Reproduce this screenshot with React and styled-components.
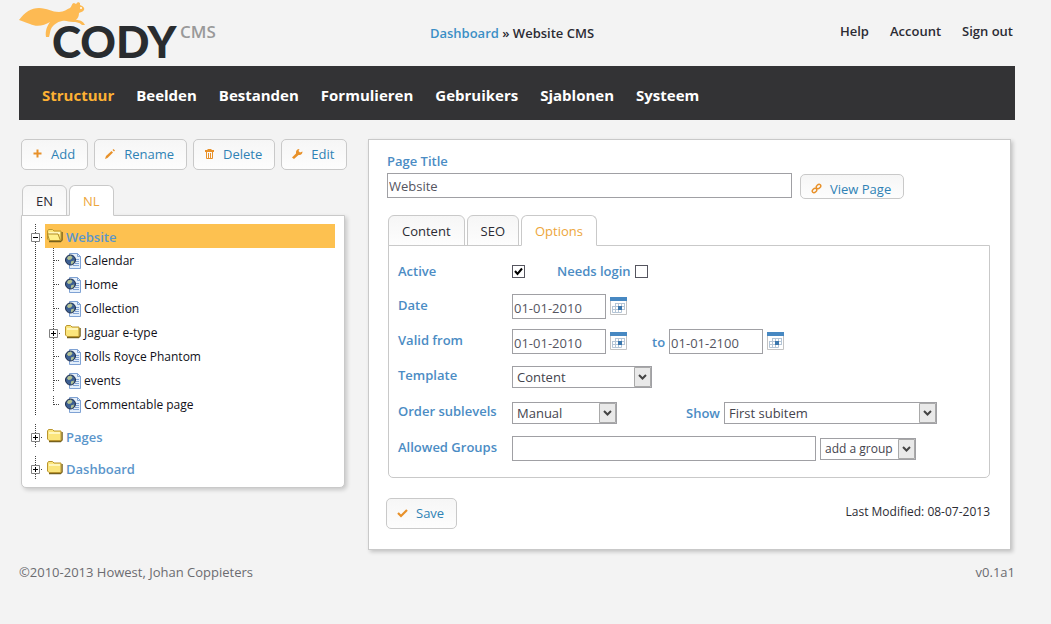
import styled, { createGlobalStyle } from "styled-components";

const GlobalStyle = createGlobalStyle`
  *, *::before, *::after {
    box-sizing: border-box;
  }
  body {
    margin: 0;
    background: #f3f3f3;
    color: #2b2b33;
    font-family: "Trebuchet MS", "Open Sans", "Noto Sans", sans-serif;
    font-size: 13px;
    line-height: 18px;
  }
  a {
    color: inherit;
    text-decoration: none;
  }
  button, input, select {
    font: inherit;
    color: inherit;
    margin: 0;
  }
`;

const Page = styled.div`
  padding: 0 36px 0 19px;
`;

const Header = styled.header`
  display: grid;
  grid-template-columns: 1fr auto 1fr;
  height: 66px;
  font-weight: 600;
`;

const Logo = styled.svg`
  width: 200px;
  height: 66px;
  overflow: visible;
`;

const Crumbs = styled.div`
  padding: 24px 10px 0 0;
  a {
    color: #3b8fc6;
  }
`;

const UserLinks = styled.nav`
  display: flex;
  justify-content: flex-end;
  gap: 21px;
  padding: 22px 2px 0 0;
`;

const MainNav = styled.nav`
  display: flex;
  align-items: center;
  gap: 22px;
  height: 54px;
  padding: 4px 23px 0;
  background: #333335;
  font-size: 15px;
  font-weight: 700;
`;

const NavLink = styled.a`
  color: ${(props) => (props.$active ? "#fdb134" : "#fff")};
`;

const Columns = styled.main`
  display: grid;
  grid-template-columns: 330px minmax(0, 1fr);
  align-items: start;
  gap: 19px;
  padding: 19px 4px 0 0;
`;

const Toolbar = styled.div`
  display: flex;
  gap: 6px;
  padding-left: 2px;
  margin-bottom: 15px;
`;

const Button = styled.button`
  display: flex;
  align-items: center;
  gap: 8px;
  height: ${(props) => (props.$small ? "25px" : "31px")};
  padding: ${(props) => (props.$small ? "4px 12px 0 10px" : "0 12px 2px 10px")};
  border: 1px solid #c9c9c9;
  border-radius: 5px;
  background: linear-gradient(#f6f6f6, #fdfdfd);
  color: #2f82b5;
  font-weight: 500;
  white-space: nowrap;
  cursor: pointer;
  svg {
    width: 11px;
    height: 11px;
    flex: none;
  }
`;

const Tabs = styled.div`
  display: flex;
  gap: 2px;
  margin: 0 0 -1px 1px;
  position: relative;
`;

const Tab = styled.button`
  height: 31px;
  padding: 0 13px;
  border: 1px solid #c9c9c9;
  border-bottom-color: ${(props) => (props.$active ? "#fff" : "#c9c9c9")};
  border-radius: 6px 6px 0 0;
  background: ${(props) => (props.$active ? "#fff" : "linear-gradient(#f6f6f6, #fdfdfd)")};
  color: ${(props) => (props.$active ? "#eda63a" : "#2b2b33")};
  font-weight: 500;
  cursor: pointer;
`;

const TreeArea = styled.div`
  padding: 0 4px 0 2px;
`;

const TreePanel = styled.div`
  padding: 8px 9px 7px;
  border: 1px solid #c9c9c9;
  border-radius: 0 0 5px 5px;
  background: #fff;
  box-shadow: 2px 2px 4px rgba(0, 0, 0, 0.18);
`;

const TreeList = styled.ul`
  display: flex;
  flex-direction: column;
  gap: 8px;
  list-style: none;
  margin: 0;
  padding: 0;
`;

const SubList = styled(TreeList)`
  gap: 0;
  padding-left: 18px;
  background: repeating-linear-gradient(#333 0 1px, transparent 1px 2px) 4px 0 / 1px 100% no-repeat;
`;

const Row = styled.div`
  display: flex;
  align-items: center;
  height: 24px;
`;

const Twig = styled.svg`
  width: 14px;
  height: 24px;
  flex: none;
`;

const NodeLabel = styled.a`
  display: flex;
  align-items: center;
  flex: 1;
  gap: 2px;
  height: 24px;
  padding: 2px 0 0 2px;
  background: ${(props) => (props.$selected ? "#fdc150" : "transparent")};
  color: ${(props) => (props.$top ? "#5b96cb" : "#101018")};
  font-size: ${(props) => (props.$top ? "13px" : "12px")};
  font-weight: ${(props) => (props.$top ? 600 : 400)};
  white-space: nowrap;
  svg {
    width: 17px;
    height: 16px;
    flex: none;
  }
`;

const Panel = styled.form`
  padding: 12px 20px 20px 18px;
  border: 1px solid #c9c9c9;
  background: #fff;
  box-shadow: 2px 2px 4px rgba(0, 0, 0, 0.2);
`;

const Label = styled.label`
  color: #4b8cc4;
  font-weight: 600;
  white-space: nowrap;
`;

const TitleRow = styled.div`
  display: flex;
  align-items: flex-start;
  gap: 8px;
  margin: 3px 0 16px;
  button {
    margin-top: 1px;
  }
`;

const TextInput = styled.input`
  width: ${(props) => props.$width};
  height: 25px;
  padding: 0 1px;
  border: 1px solid #a0a0a4;
  border-radius: 0;
  background: #fff;
  color: #55555f;
`;

const DateInput = styled(TextInput)`
  padding-top: 2px;
`;

const Options = styled.div`
  display: flex;
  flex-direction: column;
  margin-left: 1px;
  padding: 14px 9px;
  border: 1px solid #c9c9c9;
  border-radius: 0 0 5px 5px;
`;

const FieldRow = styled.div`
  display: grid;
  grid-template-columns: 114px 1fr;
  align-items: start;
  height: ${(props) => props.$height};
  > label {
    padding-top: ${(props) => (props.$select ? "0" : "2px")};
  }
`;

const Controls = styled.div`
  display: flex;
  align-items: center;
  gap: 4px;
  min-height: 22px;
`;

const Group = styled.div`
  display: flex;
  align-items: center;
  gap: 4px;
  margin-left: ${(props) => props.$indent || "0"};
`;

const CheckBox = styled.input`
  appearance: none;
  width: 13px;
  height: 13px;
  border: 1px solid #55555f;
  background: #fff;
  &:checked {
    background: #fff
      url("data:image/svg+xml,%3Csvg xmlns='http://www.w3.org/2000/svg' viewBox='0 0 11 11'%3E%3Cpath d='M2 5l2.5 3L9 2.5' fill='none' stroke='black' stroke-width='2'/%3E%3C/svg%3E");
  }
`;

const CalendarButton = styled.button`
  width: 17px;
  height: 20px;
  padding: 0 0 2px;
  border: 0;
  background: none;
  cursor: pointer;
  svg {
    display: block;
  }
`;

const SelectBox = styled.div`
  display: grid;
  width: ${(props) => props.$width};
  height: 22px;
  border: 1px solid #a0a0a4;
  background: #fff;
  select, svg {
    grid-area: 1 / 1;
  }
  select {
    appearance: none;
    width: 100%;
    padding: 0 17px 0 4px;
    border: 0;
    background: none;
    color: #44444e;
    font-size: ${(props) => (props.$compact ? "12px" : "13px")};
  }
  svg {
    justify-self: end;
    width: 17px;
    height: 20px;
    pointer-events: none;
  }
`;

const SaveRow = styled.div`
  display: flex;
  justify-content: space-between;
  align-items: flex-start;
  margin: 20px 0 0 -1px;
`;

const Modified = styled.span`
  padding-top: 5px;
  font-size: 12px;
`;

const Footer = styled.footer`
  display: flex;
  justify-content: space-between;
  padding-top: 13px;
  color: #6b6b70;
`;

const icons = {
  add: <path d="M5.5 1.5v8M1.5 5.5h8" stroke="#e8912a" strokeWidth="2" />,
  rename: (
    <g fill="#e8912a">
      <path d="M0 11l1-3 5.5-5L8 4.5 2.500 10z" />
      <path d="M7.500 2l1-1L10 2.500l-1 1z" />
    </g>
  ),
  trash: (
    <g fill="none" stroke="#e8912a">
      <path d="M1 3h9" strokeWidth="2" />
      <path d="M3.500 1.500h4M2.500 4v6.500h6V4M4.500 5v5M6.500 5v5" />
    </g>
  ),
  wrench: (
    <path
      d="M0 9.500l4-4C3.500 3 5 1 7.500 1L6.500 3 8 4.500l2.500-1C10.500 6 9 7.500 6.500 7L2 11z"
      fill="#e8912a"
    />
  ),
  link: (
    <g fill="none" stroke="#e8912a" strokeWidth="1.500">
      <ellipse cx="7.500" cy="3.500" rx="2.500" ry="1.800" transform="rotate(-45 7.500 3.500)" />
      <ellipse cx="3.500" cy="7.500" rx="2.500" ry="1.800" transform="rotate(-45 3.500 7.500)" />
    </g>
  ),
  check: <path d="M1 6l3 3 6-6" fill="none" stroke="#e8912a" strokeWidth="2.200" />,
};

function Icon({ name }) {
  return (
    <svg viewBox="0 0 11 11" aria-hidden="true">
      {icons[name]}
    </svg>
  );
}

function FolderIcon({ open }) {
  return (
    <svg viewBox="0 0 17 16" aria-hidden="true">
      <path d="M2 12.500h11.500L15 11V3" fill="none" stroke="#76601c" strokeWidth="1.500" />
      <path d="M.5 10V2l1-1.500h4L7 2h7v9.500H2z" fill="#fbe57c" stroke="#bb962e" />
      <path d="M2 3h11v2H2z" fill="#fff6bd" />
      {open && <path d="M2.500 11.500L.5 5H11l2.500 6.500z" fill="#fff08c" stroke="#b18b24" />}
    </svg>
  );
}

function PageIcon() {
  return (
    <svg viewBox="0 0 17 16" aria-hidden="true">
      <path d="M4.500.5h8l3 3v12h-11z" fill="#e4effb" stroke="#7fa2d4" />
      <path d="M12.500.5v3h3M11 6.500h3M11 8.500h3M10 10.500h4M8 12.500h6" fill="none" stroke="#7fa2d4" />
      <circle cx="5.500" cy="7" r="5" fill="#3c5f92" stroke="#1d2c4b" />
      <path d="M3 3.500l3-1 1.500 2L6 6.500 3.500 7 2 5.500zM6 8.500l3-1-.5 2.500L6 11.500z" fill="#b4c292" />
    </svg>
  );
}

function CalendarIcon() {
  return (
    <svg width="17" height="18" viewBox="0 0 17 18" aria-hidden="true">
      <path d="M.5.5h16v17H.5z" fill="#fff" stroke="#c3c3c3" />
      <path d="M0 0h17v4H0z" fill="#4788c2" />
      <path
        d="M5 6.500h9.500M2.500 9.500h12M2.500 12.500h12M2.500 15.500h9M2.500 9v6.500M5.500 6v9.500M8.500 6v9.500M11.500 6v9.500M14.500 6v7"
        fill="none"
        stroke="#b4c5d6"
      />
      <path d="M8 9h4v4H8z" fill="#3a76ad" />
    </svg>
  );
}

function Joint({ kind }) {
  const dots = { stroke: "#444", strokeDasharray: "1 1", fill: "none" };
  if (kind === "leaf" || kind === "last") {
    return (
      <Twig viewBox="0 0 14 24" aria-hidden="true">
        <path d={kind === "last" ? "M4.500 4v9" : "M4.500 0v24"} {...dots} />
        <path d="M5 12.500h6" {...dots} />
      </Twig>
    );
  }
  return (
    <Twig viewBox="0 0 14 24" aria-hidden="true">
      <path d="M4.500 0v24M10 13.500h2" {...dots} />
      <path d="M.5 9.500h8v8h-8z" fill="#fff" stroke="#808080" />
      <path d={kind === "minus" ? "M2 13.500h5" : "M2 13.500h5M4.500 11v5"} stroke="#000" />
    </Twig>
  );
}

function TreeNode({ node, nested, last }) {
  let kind = last ? "last" : "leaf";
  if (node.folder) kind = node.children ? "minus" : "plus";
  return (
    <li>
      <Row>
        <Joint kind={kind} />
        <NodeLabel href="#" $top={!nested} $selected={node.selected}>
          {node.folder ? <FolderIcon open={Boolean(node.children)} /> : <PageIcon />}
          {node.title}
        </NodeLabel>
      </Row>
      {node.children && (
        <SubList>
          {node.children.map((child, i) => (
            <TreeNode key={child.title} node={child} nested last={i === node.children.length - 1} />
          ))}
        </SubList>
      )}
    </li>
  );
}

function Select({ id, width, options, label, compact }) {
  return (
    <SelectBox $width={width} $compact={compact}>
      <select id={id} aria-label={label}>
        {options.map((option) => (
          <option key={option}>{option}</option>
        ))}
      </select>
      <svg viewBox="0 0 17 20" aria-hidden="true">
        <path d="M.5.5h16v19H.5z" fill="#e9e9e9" stroke="#a9a9a9" />
        <path d="M5 8l3.500 3.500L12 8" fill="none" stroke="#444" strokeWidth="2" />
      </svg>
    </SelectBox>
  );
}

function DateField({ id, value }) {
  return (
    <>
      <DateInput id={id} $width="94px" defaultValue={value} />
      <CalendarButton type="button" aria-label="Pick a date">
        <CalendarIcon />
      </CalendarButton>
    </>
  );
}

const navItems = ["Structuur", "Beelden", "Bestanden", "Formulieren", "Gebruikers", "Sjablonen", "Systeem"];

const tree = [
  {
    title: "Website",
    folder: true,
    selected: true,
    children: [
      { title: "Calendar" },
      { title: "Home" },
      { title: "Collection" },
      { title: "Jaguar e-type", folder: true },
      { title: "Rolls Royce Phantom" },
      { title: "events" },
      { title: "Commentable page" },
    ],
  },
  { title: "Pages", folder: true },
  { title: "Dashboard", folder: true },
];

export default function App() {
  return (
    <Page>
      <GlobalStyle />
      <Header>
        <Logo viewBox="0 0 200 66" role="img" aria-label="Cody CMS">
          <path
            d="M0 20C6 12 12 8 20 8c8 0 13 4 20 4 5 0 8-3 11-4 2-2 2-5 4-5l2 1 2-2 2 1v2c3 1 5 3 4 5-1 2-4 2-5 3 0 3-1 5-3 7 4 0 7 1 9 5l-3 0c-3-3-6-3-9-3-4 0-7-2-11-1-5 1-9 4-11 8-1 2-1 5-2 8l-3 0c-1-6 1-11 4-15-6 4-14 5-20 2C7 23 4 21 0 20z"
            fill="#fdba53"
          />
          <circle cx="62" cy="8" r="1" fill="#fff" />
          <text x="33" y="58" fontFamily="Lato" fontWeight="900" fontSize="44" fill="#292c2f">CODY</text>
          <text x="161" y="38" fontFamily="Open Sans" fontWeight="600" fontSize="17" fill="#999">CMS</text>
        </Logo>
        <Crumbs>
          <a href="#">Dashboard</a> » Website CMS
        </Crumbs>
        <UserLinks>
          <a href="#">Help</a>
          <a href="#">Account</a>
          <a href="#">Sign out</a>
        </UserLinks>
      </Header>
      <MainNav>
        {navItems.map((item) => (
          <NavLink key={item} href="#" $active={item === "Structuur"}>
            {item}
          </NavLink>
        ))}
      </MainNav>
      <Columns>
        <section>
          <Toolbar>
            <Button><Icon name="add" />Add</Button>
            <Button><Icon name="rename" />Rename</Button>
            <Button><Icon name="trash" />Delete</Button>
            <Button><Icon name="wrench" />Edit</Button>
          </Toolbar>
          <TreeArea>
            <Tabs>
              <Tab>EN</Tab>
              <Tab $active>NL</Tab>
            </Tabs>
            <TreePanel>
              <TreeList>
                {tree.map((node) => (
                  <TreeNode key={node.title} node={node} />
                ))}
              </TreeList>
            </TreePanel>
          </TreeArea>
        </section>
        <Panel>
          <Label htmlFor="title">Page Title</Label>
          <TitleRow>
            <TextInput id="title" $width="405px" defaultValue="Website" />
            <Button type="button" $small><Icon name="link" />View Page</Button>
          </TitleRow>
          <Tabs>
            <Tab type="button">Content</Tab>
            <Tab type="button">SEO</Tab>
            <Tab type="button" $active>Options</Tab>
          </Tabs>
          <Options>
            <FieldRow $height="34px">
              <Label htmlFor="active">Active</Label>
              <Controls>
                <CheckBox id="active" type="checkbox" defaultChecked />
                <Group $indent="28px">
                  <Label htmlFor="login">Needs login</Label>
                  <CheckBox id="login" type="checkbox" />
                </Group>
              </Controls>
            </FieldRow>
            <FieldRow $height="35px">
              <Label htmlFor="date">Date</Label>
              <Controls><DateField id="date" value="01-01-2010" /></Controls>
            </FieldRow>
            <FieldRow $height="37px">
              <Label htmlFor="from">Valid from</Label>
              <Controls>
                <DateField id="from" value="01-01-2010" />
                <Group $indent="21px">
                  <Label htmlFor="to">to</Label>
                  <DateField id="to" value="01-01-2100" />
                </Group>
              </Controls>
            </FieldRow>
            <FieldRow $height="36px" $select>
              <Label htmlFor="template">Template</Label>
              <Select id="template" width="140px" options={["Content"]} />
            </FieldRow>
            <FieldRow $height="34px" $select>
              <Label htmlFor="order">Order sublevels</Label>
              <Controls>
                <Select id="order" width="105px" options={["Manual"]} />
                <Group $indent="65px">
                  <Label htmlFor="show">Show</Label>
                  <Select id="show" width="213px" options={["First subitem"]} />
                </Group>
              </Controls>
            </FieldRow>
            <FieldRow $height="27px">
              <Label htmlFor="groups">Allowed Groups</Label>
              <Controls>
                <TextInput id="groups" $width="304px" />
                <Select label="Add a group" width="96px" options={["add a group"]} compact />
              </Controls>
            </FieldRow>
          </Options>
          <SaveRow>
            <Button type="button"><Icon name="check" />Save</Button>
            <Modified>Last Modified: 08-07-2013</Modified>
          </SaveRow>
        </Panel>
      </Columns>
      <Footer>
        <span>©2010-2013 Howest, Johan Coppieters</span>
        <span>v0.1a1</span>
      </Footer>
    </Page>
  );
}
